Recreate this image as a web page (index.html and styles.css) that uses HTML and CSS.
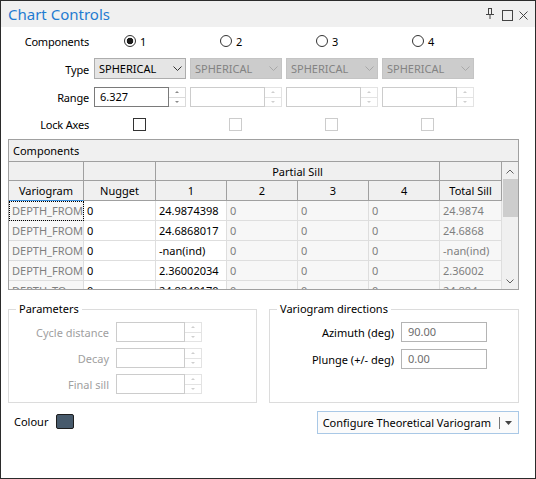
FILE: index.html
```html
<!DOCTYPE html>
<html>

<head>
    <meta charset="UTF-8">
    <title>Chart Controls</title>

    <link rel="stylesheet" href="styles.css">
</head>

<body>
<div class="window">
    <div class="titlebar">
        <span class="title">Chart Controls</span>
        <div class="titlebar-buttons">
            <svg class="icon-pin" width="8" height="11" viewBox="0 0 8 11">
                <path d="M2.5 0.5v6M5.5 0.5v6M2 0.5h4M0 6.5h8M4 7v4" stroke="#444" fill="none"/>
            </svg>
            <svg class="icon-max" width="11" height="11" viewBox="0 0 11 11">
                <rect x="0.5" y="0.5" width="10" height="10" stroke="#444" fill="none"/>
            </svg>
            <svg class="icon-close" width="9" height="9" viewBox="0 0 9 9">
                <path d="M0.5 0.5l8 8M8.5 0.5l-8 8" stroke="#444" fill="none"/>
            </svg>
        </div>
    </div>

    <div class="form">
        <label class="form-label">Components</label>
        <div class="radio-cell"><span class="radio checked"></span>1</div>
        <div class="radio-cell"><span class="radio"></span>2</div>
        <div class="radio-cell"><span class="radio"></span>3</div>
        <div class="radio-cell"><span class="radio"></span>4</div>

        <label class="form-label">Type</label>
        <div class="combo">SPHERICAL<svg width="9" height="5" viewBox="0 0 9 5"><path d="M0.5 0.5l4 4 4-4" stroke="#333" fill="none"/></svg></div>
        <div class="combo disabled">SPHERICAL<svg width="9" height="5" viewBox="0 0 9 5"><path d="M0.5 0.5l4 4 4-4" stroke="#a8a8a8" fill="none"/></svg></div>
        <div class="combo disabled">SPHERICAL<svg width="9" height="5" viewBox="0 0 9 5"><path d="M0.5 0.5l4 4 4-4" stroke="#a8a8a8" fill="none"/></svg></div>
        <div class="combo disabled">SPHERICAL<svg width="9" height="5" viewBox="0 0 9 5"><path d="M0.5 0.5l4 4 4-4" stroke="#a8a8a8" fill="none"/></svg></div>

        <label class="form-label">Range</label>
        <div class="spin"><span class="spin-text">6.327</span><span class="spin-buttons"><span class="spin-up"></span><span class="spin-down"></span></span></div>
        <div class="spin disabled"><span class="spin-text"></span><span class="spin-buttons"><span class="spin-up"></span><span class="spin-down"></span></span></div>
        <div class="spin disabled"><span class="spin-text"></span><span class="spin-buttons"><span class="spin-up"></span><span class="spin-down"></span></span></div>
        <div class="spin disabled"><span class="spin-text"></span><span class="spin-buttons"><span class="spin-up"></span><span class="spin-down"></span></span></div>

        <label class="form-label">Lock Axes</label>
        <div class="check-cell"><span class="check"></span></div>
        <div class="check-cell"><span class="check disabled"></span></div>
        <div class="check-cell"><span class="check disabled"></span></div>
        <div class="check-cell"><span class="check disabled"></span></div>
    </div>

    <div class="group">
        <div class="group-head">Components</div>
        <div class="grid-wrap">
            <table class="grid">
                <colgroup>
                    <col class="col-var">
                    <col class="col-nugget">
                    <col class="col-sill">
                    <col class="col-sill">
                    <col class="col-sill">
                    <col class="col-sill">
                    <col class="col-total">
                </colgroup>
                <tr class="head-top">
                    <th></th>
                    <th></th>
                    <th colspan="4">Partial Sill</th>
                    <th></th>
                </tr>
                <tr class="head">
                    <th class="sorted">Variogram</th>
                    <th>Nugget</th>
                    <th>1</th>
                    <th>2</th>
                    <th>3</th>
                    <th>4</th>
                    <th>Total Sill</th>
                </tr>
                <tr>
                    <td class="ro focused">DEPTH_FROM</td>
                    <td>0</td>
                    <td>24.9874398</td>
                    <td class="ro">0</td>
                    <td class="ro">0</td>
                    <td class="ro">0</td>
                    <td class="ro">24.9874</td>
                </tr>
                <tr>
                    <td class="ro">DEPTH_FROM</td>
                    <td>0</td>
                    <td>24.6868017</td>
                    <td class="ro">0</td>
                    <td class="ro">0</td>
                    <td class="ro">0</td>
                    <td class="ro">24.6868</td>
                </tr>
                <tr>
                    <td class="ro">DEPTH_FROM</td>
                    <td>0</td>
                    <td>-nan(ind)</td>
                    <td class="ro">0</td>
                    <td class="ro">0</td>
                    <td class="ro">0</td>
                    <td class="ro">-nan(ind)</td>
                </tr>
                <tr>
                    <td class="ro">DEPTH_FROM</td>
                    <td>0</td>
                    <td>2.36002034</td>
                    <td class="ro">0</td>
                    <td class="ro">0</td>
                    <td class="ro">0</td>
                    <td class="ro">2.36002</td>
                </tr>
                <tr>
                    <td class="ro">DEPTH_TO</td>
                    <td>0</td>
                    <td>24.8840170</td>
                    <td class="ro">0</td>
                    <td class="ro">0</td>
                    <td class="ro">0</td>
                    <td class="ro">24.884</td>
                </tr>
            </table>
            <div class="scrollbar">
                <svg class="scroll-arrow" width="8" height="5" viewBox="0 0 8 5"><path d="M0.5 4.5l3.5-3.5 3.5 3.5" stroke="#606060" fill="none"/></svg>
                <div class="scroll-thumb"></div>
                <svg class="scroll-arrow down" width="8" height="5" viewBox="0 0 8 5"><path d="M0.5 0.5l3.5 3.5 3.5-3.5" stroke="#606060" fill="none"/></svg>
            </div>
        </div>
    </div>

    <div class="bottom">
        <fieldset class="panel params">
            <legend>Parameters</legend>
            <div class="panel-grid">
                <label class="panel-label">Cycle distance</label>
                <div class="spin disabled"><span class="spin-text"></span><span class="spin-buttons"><span class="spin-up"></span><span class="spin-down"></span></span></div>
                <label class="panel-label">Decay</label>
                <div class="spin disabled"><span class="spin-text"></span><span class="spin-buttons"><span class="spin-up"></span><span class="spin-down"></span></span></div>
                <label class="panel-label">Final sill</label>
                <div class="spin disabled"><span class="spin-text"></span><span class="spin-buttons"><span class="spin-up"></span><span class="spin-down"></span></span></div>
            </div>
        </fieldset>
        <fieldset class="panel directions">
            <legend>Variogram directions</legend>
            <div class="panel-grid">
                <label class="panel-label">Azimuth (deg)</label>
                <div class="text-input">90.00</div>
                <label class="panel-label">Plunge (+/- deg)</label>
                <div class="text-input">0.00</div>
            </div>
        </fieldset>
    </div>

    <div class="footer">
        <div class="colour">
            <span>Colour</span>
            <span class="swatch"></span>
        </div>
        <div class="split-button">
            <span>Configure Theoretical Variogram</span>
            <span class="split-sep"></span>
            <svg width="7" height="4" viewBox="0 0 7 4"><path d="M0 0h7L3.5 4z" fill="#444"/></svg>
        </div>
    </div>
</div>
</body>

</html>
```

FILE: styles.css
```css
body {
    margin: 0;
    font-family: "Noto Sans", "Open Sans", sans-serif;
    font-size: 11px;
    color: #000;
    background: #fff;
}

.window {
    width: 536px;
    height: 479px;
    box-sizing: border-box;
    border: 1px solid #2b2b2b;
    overflow: hidden;
}

/* title bar */
.titlebar {
    height: 26px;
    background: #f0f0f0;
    display: flex;
    align-items: center;
    justify-content: space-between;
    padding: 0 7px 0 7px;
}

.title {
    font-size: 15px;
    color: #1f7bd1;
}

.titlebar-buttons {
    display: flex;
    align-items: center;
    gap: 6px;
    padding-top: 2px;
}

.icon-pin {
    margin-top: -3px;
    margin-right: 2px;
}

/* top form */
.form {
    display: grid;
    grid-template-columns: 89px repeat(4, 92px);
    grid-template-rows: 20px 22px 20px 20px;
    column-gap: 4px;
    row-gap: 7px;
    align-items: center;
    padding-top: 4px;
}

.form-label {
    text-align: right;
    padding-right: 1px;
    letter-spacing: -0.2px;
}

.radio-cell {
    display: flex;
    align-items: center;
    gap: 4px;
    padding-left: 30px;
}

.radio {
    width: 12px;
    height: 12px;
    box-sizing: border-box;
    border: 1px solid #333;
    border-radius: 50%;
}

.radio.checked {
    background: radial-gradient(circle, #1a1a1a 0 3px, transparent 3.6px);
}

.combo {
    align-self: start;
    height: 21px;
    box-sizing: border-box;
    border: 1px solid #adadad;
    background: #e5e5e5;
    display: flex;
    align-items: center;
    justify-content: space-between;
    padding: 0 3px 0 4px;
}

.combo.disabled {
    background: #cccccc;
    border-color: #c4c4c4;
    color: #838383;
}

.spin {
    height: 20px;
    display: flex;
}

.spin-text {
    flex: 1;
    box-sizing: border-box;
    border: 1px solid #7a7a7a;
    padding: 1px 5px;
    line-height: 16px;
}

.spin-buttons {
    width: 17px;
    display: flex;
    flex-direction: column;
    box-sizing: border-box;
    border: 1px solid #dadada;
    border-left: none;
}

.spin-up,
.spin-down {
    flex: 1;
    display: flex;
    align-items: center;
    justify-content: center;
}

.spin-up {
    border-bottom: 1px solid #dadada;
}

.spin-up::after {
    content: "";
    border-left: 2px solid transparent;
    border-right: 2px solid transparent;
    border-bottom: 2px solid #8a8a8a;
}

.spin-down::after {
    content: "";
    border-left: 2px solid transparent;
    border-right: 2px solid transparent;
    border-top: 2px solid #8a8a8a;
}

.spin.disabled .spin-text {
    border-color: #cccccc;
}

.spin.disabled .spin-buttons,
.spin.disabled .spin-up {
    border-color: #e3e3e3;
}

.spin.disabled .spin-up::after {
    border-bottom-color: #cfcfcf;
}

.spin.disabled .spin-down::after {
    border-top-color: #cfcfcf;
}

.check-cell {
    display: flex;
    justify-content: center;
    padding-right: 1px;
}

.check {
    width: 13px;
    height: 13px;
    box-sizing: border-box;
    border: 1px solid #333;
}

.check.disabled {
    border-color: #cccccc;
}

/* components grid */
.group {
    margin: 5px 0 0 7px;
    width: 511px;
    height: 151px;
    box-sizing: border-box;
    border: 1px solid #a0a0a0;
    overflow: hidden;
}

.group-head {
    height: 22px;
    box-sizing: border-box;
    background: #f0f0f0;
    border-bottom: 1px solid #a0a0a0;
    padding: 3px 4px 0;
}

.grid-wrap {
    display: flex;
    height: 127px;
    overflow: hidden;
}

.grid {
    table-layout: fixed;
    width: 493px;
    border-collapse: separate;
    border-spacing: 0;
    flex: none;
}

.col-var {
    width: 75px;
}

.col-nugget {
    width: 72px;
}

.col-sill {
    width: 71px;
}

.col-total {
    width: 62px;
}

.grid th {
    font-weight: normal;
    background: #f0f0f0;
    border-right: 1px solid #a0a0a0;
    border-bottom: 1px solid #a0a0a0;
    padding: 0;
    white-space: nowrap;
}

.head-top th {
    height: 19px;
    box-sizing: border-box;
}

.head th {
    height: 20px;
    box-sizing: border-box;
}

.grid th.sorted {
    border-bottom: 1px solid #3c8fdc;
}

.grid td {
    height: 20px;
    box-sizing: border-box;
    padding: 0 3px;
    border-right: 1px solid #dedede;
    border-bottom: 1px solid #dedede;
    white-space: nowrap;
    overflow: hidden;
    background: #fff;
}

.grid td.ro {
    background: #f7f7f7;
    color: #7f7f7f;
}

.grid td.focused {
    outline: 1px dotted #000;
    outline-offset: -1px;
}

.scrollbar {
    width: 16px;
    background: #f0f0f0;
    display: flex;
    flex-direction: column;
    align-items: center;
}

.scroll-arrow {
    margin-top: 7px;
    flex: none;
}

.scroll-arrow.down {
    margin-top: auto;
    margin-bottom: 5px;
}

.scroll-thumb {
    margin-top: 5px;
    margin-left: 1px;
    width: 15px;
    height: 38px;
    background: #cdcdcd;
}

/* bottom panels */
.bottom {
    display: flex;
    gap: 12px;
    margin: 11px 0 0 7px;
}

.panel {
    margin: 0;
    padding: 5px 0 8px;
    border: 1px solid #dcdcdc;
    box-sizing: border-box;
    min-width: 0;
}

.panel legend {
    margin-left: 7px;
    padding: 0 3px;
    line-height: 16px;
}

.params {
    width: 249px;
}

.directions {
    width: 250px;
}

.panel-grid {
    display: grid;
    grid-auto-rows: 20px;
    align-items: center;
}

.params .panel-grid {
    grid-template-columns: 100px 86px;
    column-gap: 7px;
    row-gap: 6px;
}

.directions .panel-grid {
    grid-template-columns: 124px 86px;
    column-gap: 7px;
    row-gap: 7px;
}

.panel-label {
    text-align: right;
}

.params .panel-label {
    color: #a0a0a0;
}

.text-input {
    height: 20px;
    box-sizing: border-box;
    border: 1px solid #b4b4b4;
    padding: 1px 6px;
    line-height: 16px;
    color: #6d6d6d;
}

/* footer */
.footer {
    display: flex;
    align-items: center;
    justify-content: space-between;
    margin-top: 8px;
    padding: 0 16px 0 13px;
}

.colour {
    display: flex;
    align-items: center;
    gap: 8px;
    margin-top: -3px;
}

.swatch {
    width: 18px;
    height: 15px;
    box-sizing: border-box;
    border: 1px solid #1e1e1e;
    border-radius: 2px;
    background: #475a6c;
}

.split-button {
    width: 202px;
    height: 23px;
    box-sizing: border-box;
    border: 1px solid #a9c8e6;
    background: #fbfbfb;
    display: flex;
    align-items: center;
    justify-content: flex-end;
    padding-right: 6px;
}

.split-sep {
    width: 1px;
    height: 12px;
    background: #777;
    margin: 0 5px 0 8px;
}
```
